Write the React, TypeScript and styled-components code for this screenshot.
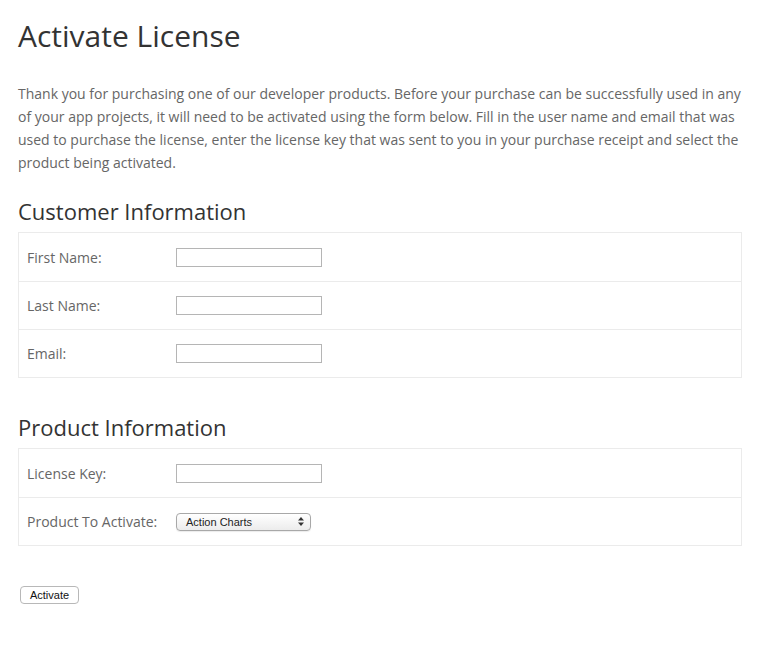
import React from "react";
import styled, { createGlobalStyle } from "styled-components";

const GlobalStyle = createGlobalStyle`
  * {
    box-sizing: border-box;
  }
  body {
    margin: 0;
    background: #ffffff;
    font-family: "Open Sans", "Noto Sans", sans-serif;
  }
`;

interface IField {
  label: string;
  kind: "text" | "select";
}

const customerFields: IField[] = [
  { label: "First Name:", kind: "text" },
  { label: "Last Name:", kind: "text" },
  { label: "Email:", kind: "text" },
];

const productFields: IField[] = [
  { label: "License Key:", kind: "text" },
  { label: "Product To Activate:", kind: "select" },
];

const FieldTable: React.FC<{ fields: IField[] }> = ({ fields }) => (
  <Table>
    {fields.map((field) => (
      <Row key={field.label}>
        <Label>{field.label}</Label>
        {field.kind === "text" ? (
          <TextInput type="text" />
        ) : (
          <SelectBox>
            <span>Action Charts</span>
            <Arrows>
              <svg width="6" height="9" viewBox="0 0 6 9">
                <path d="M3 0 L6 3.5 L0 3.5 Z" fill="#333" />
                <path d="M3 9 L6 5.5 L0 5.5 Z" fill="#333" />
              </svg>
            </Arrows>
          </SelectBox>
        )}
      </Row>
    ))}
  </Table>
);

export default function App() {
  return (
    <Page>
      <GlobalStyle />
      <Title>Activate License</Title>
      <Intro>
        Thank you for purchasing one of our developer products. Before your
        purchase can be successfully used in any of your app projects, it will
        need to be activated using the form below. Fill in the user name and
        email that was used to purchase the license, enter the license key that
        was sent to you in your purchase receipt and select the product being
        activated.
      </Intro>
      <SectionTitle>Customer Information</SectionTitle>
      <FieldTable fields={customerFields} />
      <SectionTitle $top={34}>Product Information</SectionTitle>
      <FieldTable fields={productFields} />
      <ButtonRow>
        <ActivateButton type="button">Activate</ActivateButton>
      </ButtonRow>
    </Page>
  );
}

const Page = styled.div`
  width: 784px;
  min-height: 646px;
  padding: 17px 42px 40px 18px;
  color: #333;
`;

const Title = styled.h1`
  margin: 0;
  font-size: 30px;
  font-weight: 400;
  line-height: 38px;
  color: #333;
`;

const Intro = styled.p`
  margin: 27px 0 0;
  font-size: 14px;
  line-height: 23px;
  color: #666;
`;

const SectionTitle = styled.h2<{ $top?: number }>`
  margin: ${(p) => p.$top ?? 22}px 0 6px;
  font-size: 22px;
  font-weight: 400;
  line-height: 30px;
  color: #333;
`;

const Table = styled.div`
  border: 1px solid #ebebeb;
  display: flex;
  flex-direction: column;
`;

const Row = styled.div`
  height: 48px;
  display: flex;
  align-items: center;
  padding-left: 8px;
  & + & {
    border-top: 1px solid #ebebeb;
  }
`;

const Label = styled.div`
  width: 149px;
  font-size: 14px;
  color: #666;
`;

const TextInput = styled.input`
  width: 146px;
  height: 19px;
  border: 1px solid #b5b5b5;
  padding: 0 2px;
  margin: 0;
  background: #fff;
  outline: none;
`;

const SelectBox = styled.div`
  width: 135px;
  height: 18px;
  border: 1px solid #a8a8a8;
  border-radius: 4px;
  background: linear-gradient(#ffffff, #ececec);
  display: flex;
  align-items: center;
  justify-content: space-between;
  padding: 0 6px 0 9px;
  font-family: "Liberation Sans", Arial, sans-serif;
  font-size: 11px;
  color: #222;
  box-shadow: 0 1px 1px rgba(0, 0, 0, 0.08);
`;

const Arrows = styled.span`
  display: flex;
  align-items: center;
`;

const ButtonRow = styled.div`
  margin-top: 36px;
  padding-left: 2px;
`;

const ActivateButton = styled.button`
  width: 59px;
  height: 18px;
  padding: 0;
  border: 1px solid #b8b8b8;
  border-radius: 4px;
  background: #fff;
  font-family: "Liberation Sans", Arial, sans-serif;
  font-size: 11px;
  color: #111;
`;
